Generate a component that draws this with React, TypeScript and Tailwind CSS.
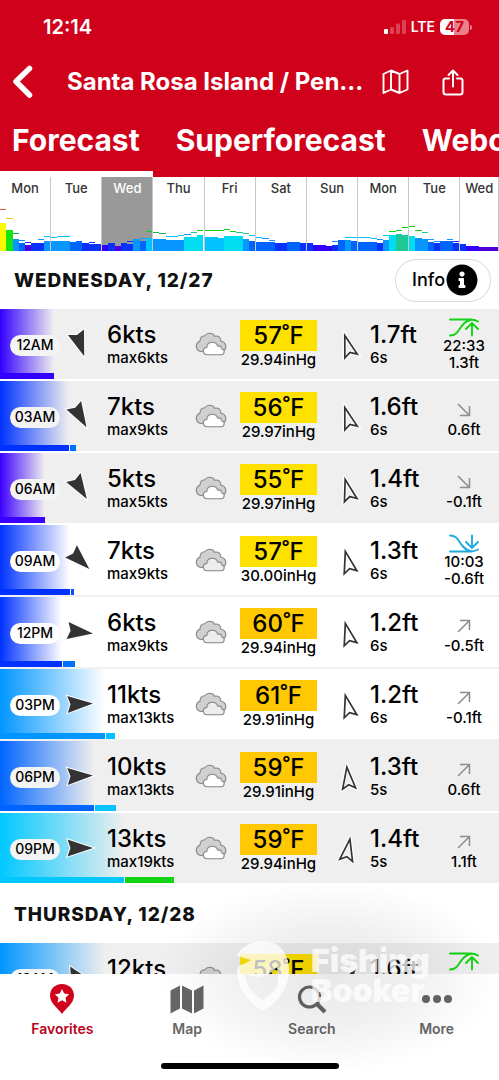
import { FaInfoCircle } from "react-icons/fa";

type Tide = { kind: "high" | "low"; time: string; level: string } | { kind: "rising" | "falling"; level: string };

interface ForecastEntry {
    time: string;
    wind: number;
    gust: number;
    windDeg: number;
    color: string;
    gustColor: string;
    fade: number; // end of the wind bar, % of the row
    gustEnd: number; // end of the gust bar, % of the row
    night: boolean;
    temp: number;
    pressure: string;
    waveDeg: number;
    wave: string;
    period: number;
    tide: Tide;
}

const wednesday: ForecastEntry[] = [
    { time: "12AM", wind: 6, gust: 6, windDeg: 71, color: "#3200ff", gustColor: "#3200ff", fade: 10.8, gustEnd: 0, night: true, temp: 57, pressure: "29.94", waveDeg: -17, wave: "1.7", period: 6, tide: { kind: "high", time: "22:33", level: "1.3" } },
    { time: "03AM", wind: 7, gust: 9, windDeg: 60, color: "#0032ff", gustColor: "#0070ff", fade: 13.8, gustEnd: 15.2, night: true, temp: 56, pressure: "29.97", waveDeg: -17, wave: "1.6", period: 6, tide: { kind: "falling", level: "0.6" } },
    { time: "06AM", wind: 5, gust: 5, windDeg: 58, color: "#3c00ff", gustColor: "#3c00ff", fade: 9, gustEnd: 0, night: true, temp: 55, pressure: "29.97", waveDeg: -15, wave: "1.4", period: 6, tide: { kind: "falling", level: "-0.1" } },
    { time: "09AM", wind: 7, gust: 9, windDeg: 44, color: "#0032ff", gustColor: "#0050ff", fade: 14.1, gustEnd: 14.8, night: false, temp: 57, pressure: "30.00", waveDeg: -14, wave: "1.3", period: 6, tide: { kind: "low", time: "10:03", level: "-0.6" } },
    { time: "12PM", wind: 6, gust: 9, windDeg: 7, color: "#0032ff", gustColor: "#0070ff", fade: 12.5, gustEnd: 15.1, night: false, temp: 60, pressure: "29.94", waveDeg: -14, wave: "1.2", period: 6, tide: { kind: "rising", level: "-0.5" } },
    { time: "03PM", wind: 11, gust: 13, windDeg: -2, color: "#0096ff", gustColor: "#00c3ff", fade: 21.1, gustEnd: 23.1, night: false, temp: 61, pressure: "29.91", waveDeg: -14, wave: "1.2", period: 6, tide: { kind: "rising", level: "-0.1" } },
    { time: "06PM", wind: 10, gust: 13, windDeg: -2, color: "#0064ff", gustColor: "#00c3ff", fade: 18.8, gustEnd: 23.3, night: true, temp: 59, pressure: "29.91", waveDeg: -6, wave: "1.3", period: 5, tide: { kind: "rising", level: "0.6" } },
    { time: "09PM", wind: 13, gust: 19, windDeg: 0, color: "#00c8ff", gustColor: "#14d214", fade: 24.9, gustEnd: 34.8, night: true, temp: 59, pressure: "29.94", waveDeg: 10, wave: "1.4", period: 5, tide: { kind: "rising", level: "1.1" } },
];

const thursday: ForecastEntry[] = [
    { time: "12AM", wind: 12, gust: 17, windDeg: 15, color: "#0096ff", gustColor: "#00c3ff", fade: 21, gustEnd: 30, night: true, temp: 58, pressure: "29.94", waveDeg: 35, wave: "1.6", period: 5, tide: { kind: "high", time: "22:47", level: "1.1" } },
];

const P = "#5000dc";
const V = "#3200ff";
const D = "#0a32ff";
const B = "#0064ff";
const L = "#0a96ff";
const C = "#00c3ff";
const T = "#00dcf0";
const G = "#1ec896";
const GL = "#14d214";

// [height, colour, gust height, gust colour] for every three hours
type Bar = [number, string, number?, string?];

const days: { name: string; bars: Bar[] }[] = [
    { name: "Mon", bars: [[28, "#fafa00", 41, "#e65a1e"], [21, "#14e614", 32, "#e6c814"], [12, L, 17, "#14b464"], [8, B, 10, L], [6, P, 8, D], [8, D], [8, D, 11, L], [10, L, 14, C]] },
    { name: "Tue", bars: [[10, L, 13, C], [10, L, 14, C], [10, L, 14, C], [9, B], [10, B], [8, D], [7, D, 8, D], [7, D]] },
    { name: "Wed", bars: [[6, V], [8, D], [5, P], [8, D], [7, D, 9, D], [12, L], [10, B, 12, L], [13, C, 19, GL]] },
    { name: "Thu", bars: [[12, L, 18, "#14b464"], [12, L, 17, "#14b464"], [11, L, 14, C], [11, L, 14, C], [11, L, 15, C], [14, T, 16, L], [14, T, 18, G], [16, T, 20, GL]] },
    { name: "Fri", bars: [[14, C, 20, GL], [14, C, 20, GL], [13, C, 20, GL], [15, T, 21, GL], [15, T, 19, GL], [15, T, 18, G], [12, L, 17, G], [10, B, 15, C]] },
    { name: "Sat", bars: [[9, B, 13, C], [9, B, 12, L], [9, B, 10, L], [8, D], [8, D], [9, B], [9, B], [8, D]] },
    { name: "Sun", bars: [[8, D], [6, V], [6, V], [5, V], [6, D, 9, L], [11, B], [11, L, 13, C], [10, B, 13, C]] },
    { name: "Mon", bars: [[9, B, 13, C], [9, B, 13, C], [9, B, 12, C], [8, D, 11, L], [11, L, 15, C], [16, T, 19, GL], [17, G, 20, GL], [16, G, 23, GL]] },
    { name: "Tue", bars: [[15, T, 24, GL], [13, L, 20, GL], [12, L, 18, G], [9, B, 11, L], [8, D, 9, L], [10, B], [10, B, 11, L], [8, D, 9, D]] },
    { name: "Wed", bars: [[7, D], [5, V], [5, V], [4, P], [4, P], [4, P]] },
];

function DayChart({ bars }: { bars: Bar[] }) {
    return (
        <svg viewBox={`0 0 ${bars.length} 50`} preserveAspectRatio="none" shapeRendering="crispEdges" className="block h-[50px] w-full" aria-hidden="true">
            {bars.map(([h, color, gust, gustColor], i) => (
                <g key={i}>
                    <rect x={i} y={50 - h} width="1" height={h} fill={color} />
                    {gust && <rect x={i} y={50 - gust - 1} width="1" height="1" fill={gustColor} />}
                </g>
            ))}
        </svg>
    );
}

function Cloud({ light }: { light: boolean }) {
    return (
        <svg viewBox="0 0 32 24" className="h-6 w-8" fill="none" stroke="#858585" strokeWidth="1.1" aria-hidden="true">
            <path d="M7 19.5C3.5 19.5 1.3 17.3 1.3 14.4c0-2.7 1.5-4.500 3.700-5.200C5 5.500 7 3.800 9.800 3.700 11 2 12.500 1.300 14.500 1.300c2.600 0 4.300 1.100 5 2.900 3.700-.9 6.300 1 6.500 5 3 .6 4.800 2.700 4.800 5.300 0 3-2 4.600-5 4.600z" fill="#d0d0d0" />
            <path d="M12.500 22.700c-2.600 0-4.200-1.500-4.200-3.700 0-2 1.400-3.400 3.500-3.600.2-3.100 2.600-5.100 5.500-5.100 2.600 0 4.500 1.400 5.200 3.600 2.600-.3 4.300 1 4.400 3.100 1.500.3 2.300 1.300 2.300 2.600 0 1.900-1.300 3.100-3.200 3.100z" fill={light ? "#fff" : "#ededed"} />
        </svg>
    );
}

function WindArrow({ deg }: { deg: number }) {
    return (
        <svg viewBox="-17 -17 34 34" className="h-[34px] w-[34px] shrink-0" aria-hidden="true">
            <path d="M-12.500-8.500L13 0L-12.500 8.500L-9.500 0z" transform={`rotate(${deg})`} fill="#333" stroke="#fff" strokeWidth="2" paintOrder="stroke" />
        </svg>
    );
}

function WaveArrow({ deg }: { deg: number }) {
    return (
        <svg viewBox="-15 -15 30 30" className="h-[30px] w-[30px] shrink-0" aria-hidden="true">
            <g transform={`rotate(${deg})`}>
                <path d="M0-12L7 11L0 7L-7 11z" fill="none" stroke="#fff" strokeWidth="3.500" />
                <path d="M0-11L6.500 10.500L0 6.800L-6.500 10.500z" fill="none" stroke="#333" strokeWidth="1.700" />
            </g>
        </svg>
    );
}

function TideIcon({ kind }: { kind: Tide["kind"] }) {
    if (kind === "high") {
        return (
            <svg viewBox="0 0 32 19" className="h-[19px] w-8" fill="none" stroke="#14d214" strokeWidth="1.900" strokeLinecap="round" aria-hidden="true">
                <path d="M2 1.500H22Q27 1.500 30 3.500M2 17.500C10 17.500 10.500 11 15 6.500Q18.500 2.500 24 1.500M24 17.500V5.500M18 11L24 5L30 11" />
            </svg>
        );
    }
    if (kind === "low") {
        return (
            <svg viewBox="0 0 32 19" className="h-[19px] w-8" fill="none" stroke="#1eaadc" strokeWidth="1.900" strokeLinecap="round" aria-hidden="true">
                <path d="M2 17.500H22Q27 17.500 30 15.500M2 1.500C10 1.500 10.500 8 15 12.500Q18.500 16.500 24 17.500M24 1.500V13.500M18 8L24 14L30 8" />
            </svg>
        );
    }
    return (
        <svg viewBox="0 0 14 14" className="mb-1 h-[14px] w-[14px]" fill="none" stroke="#8c8c8c" strokeWidth="1.500" aria-hidden="true">
            <path d={kind === "rising" ? "M1 13L12.500 1.500M3 1.500H12.500V11" : "M1 1L12.500 12.500M12.500 3V12.500H3"} />
        </svg>
    );
}

function ForecastRow({ entry }: { entry: ForecastEntry }) {
    const { tide } = entry;
    return (
        <li className={`relative h-[72px] border-b-2 ${entry.night ? "border-white bg-[#efefef]" : "border-[#f0f0f0] bg-white"}`}>
            <div
                className="absolute inset-y-0 left-0"
                style={{ width: `${entry.fade}%`, background: `linear-gradient(to right, ${entry.color}, ${entry.color}00)` }}
            />
            <div className="absolute bottom-0 left-0 h-[6px]" style={{ width: `${entry.fade}%`, background: entry.color }} />
            {entry.gustEnd > 0 && (
                <div
                    className="absolute bottom-0 h-[6px] border-l border-white"
                    style={{ left: `${entry.fade}%`, width: `${entry.gustEnd - entry.fade}%`, background: entry.gustColor }}
                />
            )}
            <div className="relative grid h-full grid-cols-[63fr_34fr_84fr_59fr_77fr_53fr_59fr_70fr] items-center">
                <span className={`ml-[10px] mt-[2px] flex h-[21px] w-[50px] items-center justify-center rounded-full text-sm font-medium ${entry.night ? "bg-[#f4f4f4]" : "bg-white"}`}>
                    {entry.time}
                </span>
                <div className="flex justify-center">
                    <WindArrow deg={entry.windDeg} />
                </div>
                <div className="pt-px pl-[10px]">
                    <p className="text-2xl leading-[26px] font-medium whitespace-nowrap">{entry.wind}kts</p>
                    <p className="text-[15px] leading-5 font-medium whitespace-nowrap">max{entry.gust}kts</p>
                </div>
                <div className="flex justify-center">
                    <Cloud light={entry.night} />
                </div>
                <div className="text-center">
                    <p className={`h-[31px] text-2xl leading-[31px] font-medium ${entry.temp < 59 ? "bg-[#ffe100]" : "bg-[#ffc800]"}`}>{entry.temp}˚F</p>
                    <p className="text-[15px] leading-[18px] font-medium whitespace-nowrap">{entry.pressure}inHg</p>
                </div>
                <div className="flex justify-center pt-1 pl-2">
                    <WaveArrow deg={entry.waveDeg} />
                </div>
                <div className="pt-px">
                    <p className="text-2xl leading-[26px] font-medium whitespace-nowrap">{entry.wave}ft</p>
                    <p className="text-[15px] leading-5 font-medium">{entry.period}s</p>
                </div>
                <div className={`flex flex-col items-center text-[15px] leading-[17px] font-medium ${"time" in tide ? "" : "pt-2"}`}>
                    <TideIcon kind={tide.kind} />
                    {"time" in tide && <p>{tide.time}</p>}
                    <p>{tide.level}ft</p>
                </div>
            </div>
        </li>
    );
}

function DayHeading({ children }: { children: string }) {
    return <h2 className="pt-[2px] pl-[14px] text-[19px] font-extrabold tracking-wider text-[#111]">{children}</h2>;
}

function StatusBar() {
    return (
        <div className="flex h-[54px] items-center justify-between pr-[27px] pl-[43px]">
            <span className="text-xl font-semibold">12:14</span>
            <div className="flex items-center gap-[5px]">
                <svg viewBox="0 0 22 14" className="h-[14px] w-[22px]" fill="#fff" aria-hidden="true">
                    <rect y="9" width="4" height="5" rx="1" />
                    <rect x="6" y="7" width="4" height="7" rx="1" opacity=".25" />
                    <rect x="12" y="3.500" width="4" height="10.500" rx="1" opacity=".25" />
                    <rect x="18" width="4" height="14" rx="1" opacity=".25" />
                </svg>
                <span className="text-sm font-semibold">LTE</span>
                <div className="flex items-center gap-px">
                    <span className="flex h-4 w-[29px] items-center justify-center rounded-[5px] bg-linear-to-r from-white from-47% to-[#ea8089] to-47% text-[15px] font-bold text-[#d0021b]">47</span>
                    <span className="h-[5px] w-[2px] rounded-r-full bg-[#ea8089]" />
                </div>
            </div>
        </div>
    );
}

function Header() {
    return (
        <header className="shrink-0 bg-[#d0021b] text-white">
            <StatusBar />
            <div className="flex h-14 items-center pr-[35px] pl-3">
                <button aria-label="Back" className="mr-[33px] shrink-0">
                    <svg viewBox="0 0 22 34" className="h-[34px] w-[22px]" fill="none" stroke="#fff" strokeWidth="5.500" strokeLinecap="round" strokeLinejoin="round" aria-hidden="true">
                        <path d="M17.500 3.500L4 16.500L17.500 30" />
                    </svg>
                </button>
                <h1 className="flex-1 truncate text-2xl font-bold">Santa Rosa Island / Pen...</h1>
                <button aria-label="Map" className="mr-[33px] ml-[14px] shrink-0">
                    <svg viewBox="0 0 27 26" className="h-[26px] w-[27px]" fill="none" stroke="#fff" strokeWidth="1.900" strokeLinejoin="round" aria-hidden="true">
                        <path d="M1.500 5L9 1.500L17.500 5L25.500 1.500V20.500L17.500 24L9 20.500L1.500 24zM9 1.500V20.500M17.500 5V24" />
                    </svg>
                </button>
                <button aria-label="Share" className="shrink-0">
                    <svg viewBox="0 0 22 27" className="h-[27px] w-[22px]" fill="none" stroke="#fff" strokeWidth="2" strokeLinecap="round" strokeLinejoin="round" aria-hidden="true">
                        <path d="M7 9.500H3.500Q1.500 9.500 1.500 11.500V23Q1.500 25.500 4 25.500H18Q20.500 25.500 20.500 23V11.500Q20.500 9.500 18.500 9.500H15M11 17.500V2M6.500 6L11 1.500L15.500 6" />
                    </svg>
                </button>
            </div>
            <nav className="flex h-[61px] items-center gap-9 overflow-hidden pl-3 text-[30px] font-bold whitespace-nowrap">
                <a href="#forecast">Forecast</a>
                <a href="#superforecast">Superforecast</a>
                <a href="#webcams">Webcams</a>
            </nav>
            <div className="h-[6px] w-[153px] bg-white" />
        </header>
    );
}

function Overview() {
    return (
        <div className="flex h-[74px] shrink-0 bg-white">
            {days.map((day, i) => (
                <div
                    key={i}
                    className={`flex min-w-0 basis-0 flex-col justify-between border-r border-[#c8c8c8] text-center text-[13px] leading-[22px] font-medium ${i === 2 ? "bg-[#999] text-white" : "text-[#333]"}`}
                    style={{ flexGrow: day.bars.length }}
                >
                    <span>{day.name}</span>
                    <DayChart bars={day.bars} />
                </div>
            ))}
        </div>
    );
}

function TabBar() {
    const item = "flex flex-1 flex-col items-center gap-1 pt-[9px] text-sm leading-5 font-semibold";
    return (
        <nav className="h-[106px] shrink-0 bg-white">
            <div className="flex h-[89px] text-[#666]">
                <a href="#favorites" className={`${item} text-[#b8041c]`}>
                    <svg viewBox="0 0 26 32" className="h-8 w-[26px]" aria-hidden="true">
                        <path d="M13 1C6 1 1 6 1 12.500C1 20.500 9 25 13 31C17 25 25 20.500 25 12.500C25 6 20 1 13 1z" fill="#d0021b" />
                        <path d="M13 6L15.200 10.600L20.200 11.200L16.500 14.700L17.500 19.700L13 17.200L8.500 19.700L9.500 14.700L5.800 11.200L10.800 10.600z" fill="#fff" />
                    </svg>
                    Favorites
                </a>
                <a href="#map" className={item}>
                    <svg viewBox="0 0 34 32" className="h-8 w-[34px]" fill="#666" aria-hidden="true">
                        <path d="M.5 7.500L10 2.500V25.500L.5 30.500zM12 2.500L22 7.500V30.500L12 25.500zM24 7.500L33.500 2.500V25.500L24 30.500z" />
                    </svg>
                    Map
                </a>
                <a href="#search" className={item}>
                    <svg viewBox="0 0 30 32" className="h-8 w-[30px]" fill="none" stroke="#666" aria-hidden="true">
                        <circle cx="12.500" cy="14" r="10" strokeWidth="3.200" />
                        <path d="M20 21L28 29" strokeWidth="4.200" />
                    </svg>
                    Search
                </a>
                <a href="#more" className={item}>
                    <svg viewBox="0 0 32 32" className="h-8 w-8" fill="#666" aria-hidden="true">
                        <circle cx="5" cy="16" r="4" />
                        <circle cx="16" cy="16" r="4" />
                        <circle cx="27" cy="16" r="4" />
                    </svg>
                    More
                </a>
            </div>
            <div className="mx-auto h-[6px] w-[178px] rounded-full bg-black" />
        </nav>
    );
}

function Watermark() {
    return (
        <div className="pointer-events-none absolute right-0 bottom-2 flex h-[192px] w-[340px] items-center bg-[radial-gradient(closest-side,rgba(0,0,0,0.09),rgba(0,0,0,0.06)_50%,transparent)] pl-[76px]">
            <svg viewBox="0 0 56 72" className="h-[72px] w-14" fill="#fff" fillOpacity=".75" fillRule="evenodd" aria-hidden="true">
                <path d="M28 1C15 1 5 8 2 16L16 20L9 24C4 24 2 28 2 31C2 48 13 62 28 71C43 62 54 48 54 30C54 12 43 1 28 1zM10 34C22 39 32 38 42 27L43 36C44 47 38 54 28 60C18 54 11 46 10 34z" />
            </svg>
            <p className="pl-5 text-[32px] leading-[30px] font-black text-white/75">
                Fishing
                <br />
                Booker
            </p>
        </div>
    );
}

export default function App() {
    return (
        <div className="relative flex h-screen flex-col overflow-hidden bg-white font-[Inter,sans-serif] text-black">
            <Header />
            <Overview />
            <main className="min-h-0 flex-1 overflow-hidden">
                <div className="flex h-[58px] items-center justify-between pr-2">
                    <DayHeading>WEDNESDAY, 12/27</DayHeading>
                    <button className="flex h-[43px] w-24 items-center justify-end gap-px rounded-full border border-[#d8d8d8] pr-3 text-lg font-medium">
                        Info
                        <FaInfoCircle size={32} />
                    </button>
                </div>
                <ul>
                    {wednesday.map((entry) => (
                        <ForecastRow key={entry.time} entry={entry} />
                    ))}
                </ul>
                <div className="flex h-[58px] items-center">
                    <DayHeading>THURSDAY, 12/28</DayHeading>
                </div>
                <ul>
                    {thursday.map((entry) => (
                        <ForecastRow key={entry.time} entry={entry} />
                    ))}
                </ul>
            </main>
            <TabBar />
            <Watermark />
        </div>
    );
}
